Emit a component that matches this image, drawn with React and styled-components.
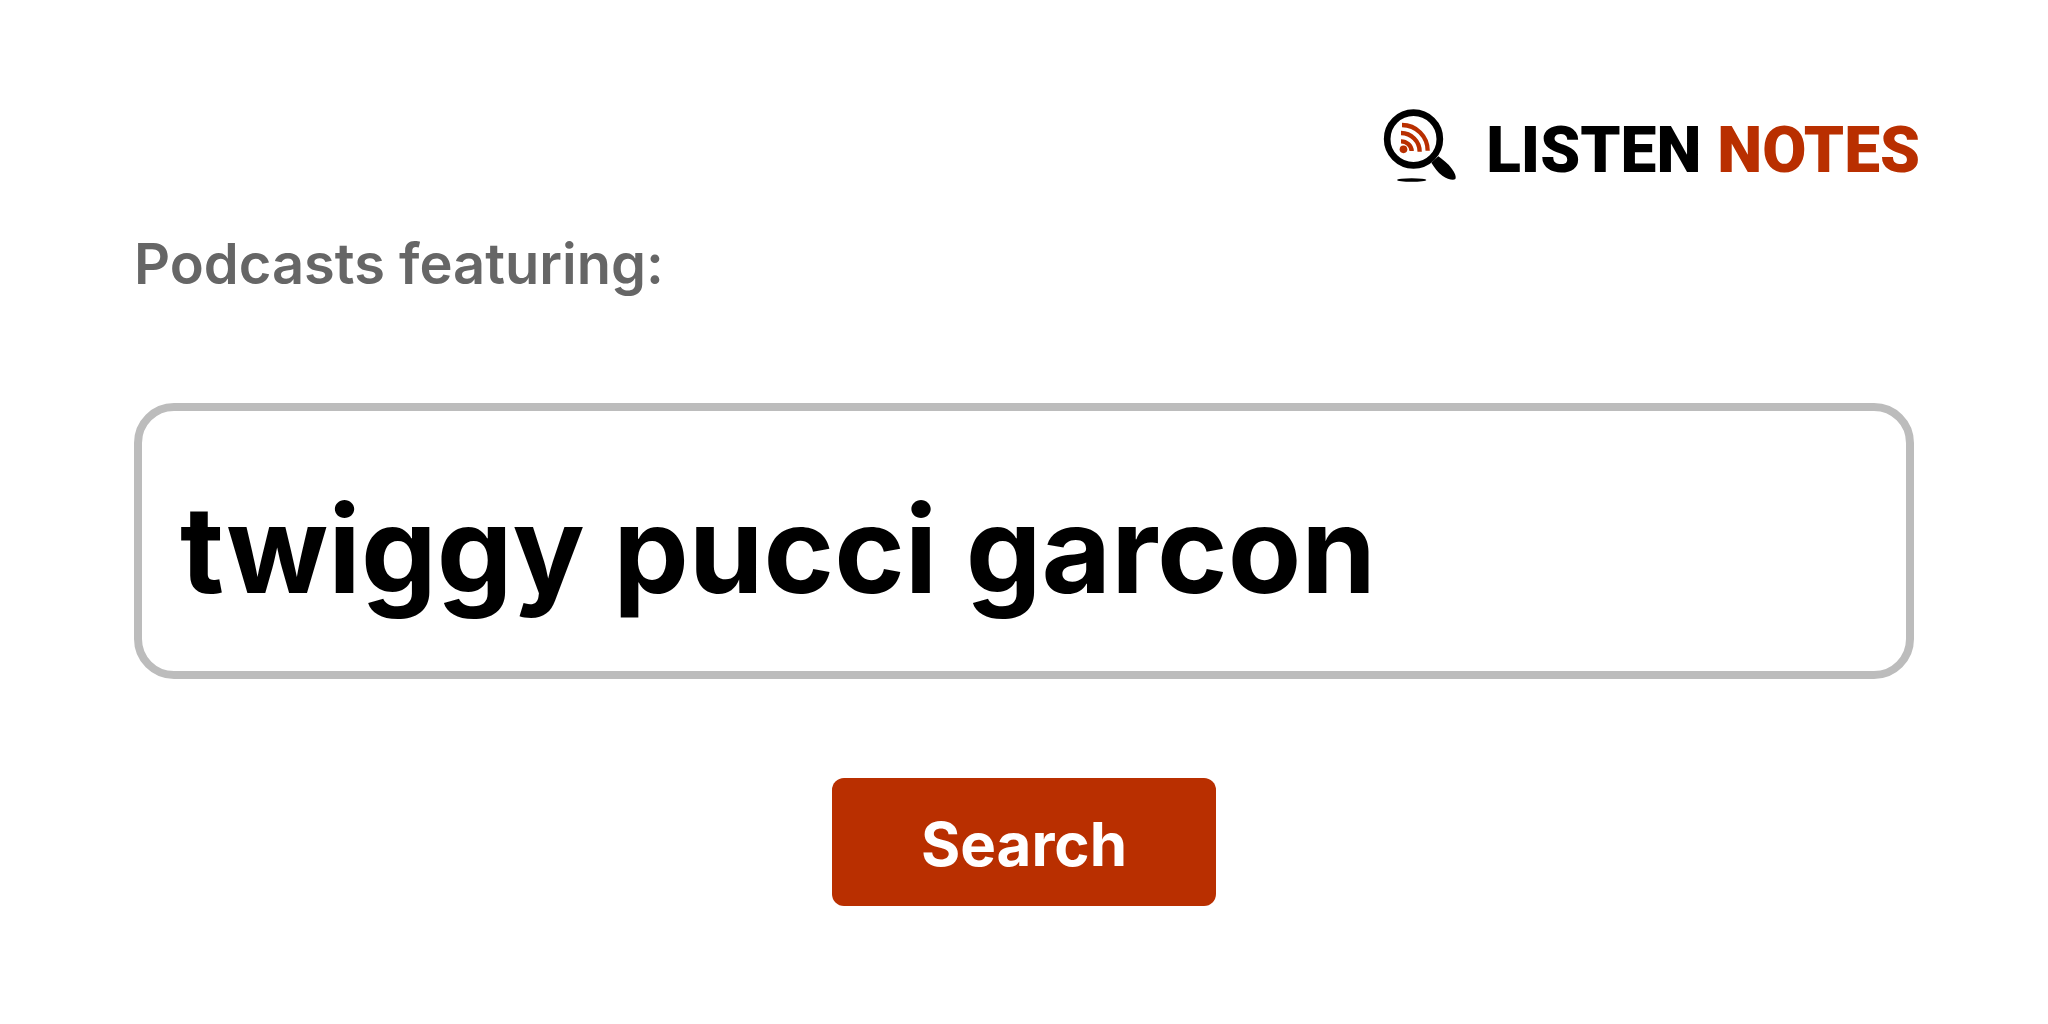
import React, { useState } from 'react'
import styled, { createGlobalStyle } from 'styled-components'

function LogoIcon() {
  return (
    <IconSvg viewBox="0 0 300 300" aria-hidden="true">
      <circle cx="130.5" cy="132" r="79" fill="none" stroke="#000" strokeWidth="20" />
      <path
        d="M184 203 L205 184 C217 193 235 206 246 222 C254 233 260 246 256 252 C250 258 232 252 217 242 C203 232 193 217 184 203 Z"
        fill="#000"
      />
      <ellipse cx="125" cy="255" rx="44" ry="5.5" fill="#000" />
      <circle cx="100.5" cy="163" r="11.5" fill="#b92f00" />
      <g fill="none" stroke="#b92f00" strokeWidth="13">
        <path d="M96 90 A77 77 0 0 1 173 167" />
        <path d="M93 114 A56 56 0 0 1 149 170" />
        <path d="M93 139 A32 30 0 0 1 125 168" />
      </g>
    </IconSvg>
  )
}

function App() {
  const [query, setQuery] = useState('twiggy pucci garcon')

  return (
    <Page>
      <GlobalStyle />
      <Header>
        <LogoLink href="/">
          <LogoIcon />
          <LogoText>
            LISTEN <LogoAccent>NOTES</LogoAccent>
          </LogoText>
        </LogoLink>
      </Header>
      <SearchForm onSubmit={(event) => event.preventDefault()}>
        <SearchLabel htmlFor="query">Podcasts featuring:</SearchLabel>
        <SearchInput
          id="query"
          type="text"
          value={query}
          onChange={(event) => setQuery(event.target.value)}
        />
        <SearchButton type="submit">Search</SearchButton>
      </SearchForm>
    </Page>
  )
}

const GlobalStyle = createGlobalStyle`
  * {
    box-sizing: border-box;
  }

  body {
    margin: 0;
    background: #fff;
    font-family: Inter, 'Liberation Sans', sans-serif;
  }
`

const Page = styled.main`
  padding: 95px 128px;
`

const Header = styled.header`
  display: flex;
  justify-content: flex-end;
`

const LogoLink = styled.a`
  display: flex;
  align-items: center;
  gap: 16px;
  color: #000;
  text-decoration: none;
`

const IconSvg = styled.svg`
  width: 100px;
  height: 100px;
`

const LogoText = styled.span`
  padding-top: 12px;
  font-family: Roboto, sans-serif;
  font-size: 64px;
  font-weight: 900;
  line-height: 88px;
`

const LogoAccent = styled.span`
  color: #b92f00;
`

const SearchForm = styled.form`
  display: flex;
  flex-direction: column;
  padding: 0 6px;
`

const SearchLabel = styled.label`
  margin: 35px 0 105px;
  color: #666;
  font-size: 56px;
  font-weight: 600;
  line-height: 68px;
`

const SearchInput = styled.input`
  width: 100%;
  height: 276px;
  padding: 16px 38px 0;
  border: 8px solid #bcbcbc;
  border-radius: 40px;
  outline: none;
  background: #fff;
  color: #000;
  font-family: inherit;
  font-size: 120px;
  font-weight: 700;
`

const SearchButton = styled.button`
  align-self: center;
  width: 384px;
  height: 128px;
  margin-top: 99px;
  padding: 4px 0 0;
  border: none;
  border-radius: 12px;
  background: #b92f00;
  color: #fff;
  font-family: inherit;
  font-size: 60px;
  font-weight: 700;
  cursor: pointer;
`

export default App
